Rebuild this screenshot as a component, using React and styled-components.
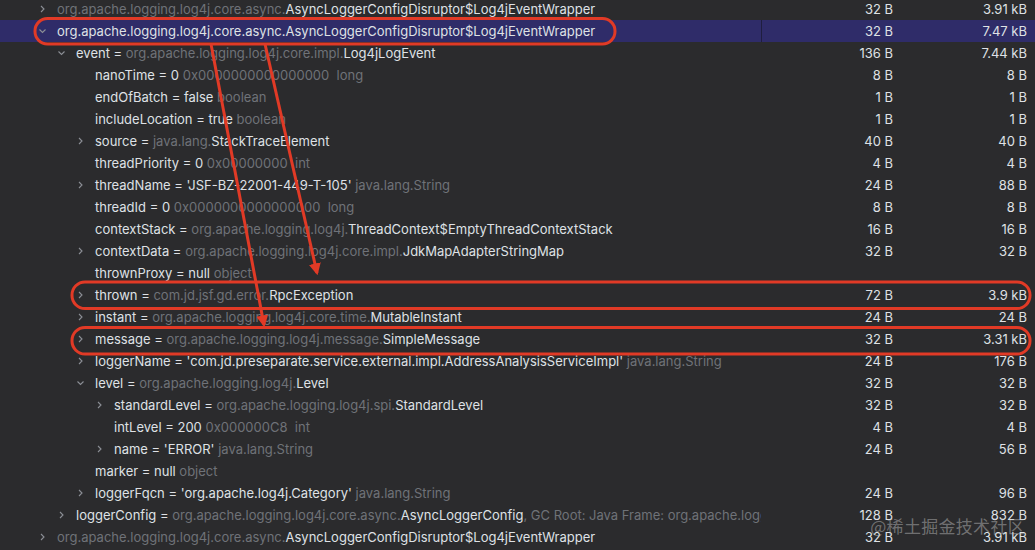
import React from 'react';
import styled, { createGlobalStyle } from 'styled-components';

const GlobalStyle = createGlobalStyle`
    html, body {
        margin: 0;
        padding: 0;
        background: #2b2b2d;
        overflow: hidden;
    }
    body {
        font-family: Inter, 'Noto Sans', sans-serif;
        -webkit-font-smoothing: antialiased;
    }
`;

const Page = styled.div`
    position: relative;
    width: 1035px;
    height: 550px;
    overflow: hidden;
    background: #2b2b2d;
`;

const Tree = styled.div`
    display: flex;
    flex-direction: column;
    margin-top: -2px;
`;

const Row = styled.div`
    display: grid;
    grid-template-columns: 762px 138px 135px;
    height: 22px;
    align-items: center;
    font-size: 13px;
    color: #dfe1e5;
    background: ${p => (p.selected ? '#2f2c69' : 'transparent')};
`;

const NameCell = styled.div`
    display: flex;
    align-items: center;
    height: 100%;
    overflow: hidden;
    padding-left: ${p => 38 + p.level * 19}px;
    border-right: 1px solid ${p => (p.selected ? '#1f1e3f' : 'transparent')};
`;

const Label = styled.span`
    white-space: pre;
`;

const Toggle = styled.span`
    display: inline-flex;
    align-items: center;
    justify-content: flex-start;
    flex: none;
    width: 19px;
    height: 22px;
    color: #8c8f96;
`;

const Gray = styled.span`
    color: #6f7278;
`;

const SizeCell = styled.div`
    text-align: right;
    padding-right: ${p => p.pad}px;
    color: #dfe1e5;
`;

const Overlay = styled.svg`
    position: absolute;
    left: 0;
    top: 0;
    pointer-events: none;
`;

const Watermark = styled.div`
    position: absolute;
    right: 10px;
    bottom: 12px;
    font-family: 'Noto Sans CJK SC', sans-serif;
    font-size: 17px;
    color: rgba(200, 200, 200, 0.45);
    letter-spacing: 0.3px;
`;

const Chevron = ({ open }) => (
    <svg width="10" height="10" viewBox="0 0 10 10">
        {open
            ? <polyline points="1.5,3.5 4.5,6.5 7.5,3.5" fill="none" stroke="currentColor" strokeWidth="1.1" />
            : <polyline points="3,2 6,5 3,8" fill="none" stroke="currentColor" strokeWidth="1.1" />}
    </svg>
);

// [level, toggle ('>', 'v' or ''), name, gray, white, tail, shallow, retained, selected]
const rows = [
    [0, '>', '', 'org.apache.logging.log4j.core.async.', 'AsyncLoggerConfigDisruptor$Log4jEventWrapper', '', '32 B', '3.91 kB'],
    [0, 'v', 'org.apache.logging.log4j.core.async.AsyncLoggerConfigDisruptor$Log4jEventWrapper', '', '', '', '32 B', '7.47 kB', true],
    [1, 'v', 'event = ', 'org.apache.logging.log4j.core.impl.', 'Log4jLogEvent', '', '136 B', '7.44 kB'],
    [2, '', 'nanoTime = 0 ', '0x0000000000000000  long', '', '', '8 B', '8 B'],
    [2, '', 'endOfBatch = false ', 'boolean', '', '', '1 B', '1 B'],
    [2, '', 'includeLocation = true ', 'boolean', '', '', '1 B', '1 B'],
    [2, '>', 'source = ', 'java.lang.', 'StackTraceElement', '', '40 B', '40 B'],
    [2, '', 'threadPriority = 0 ', '0x00000000  int', '', '', '4 B', '4 B'],
    [2, '>', "threadName = 'JSF-BZ-22001-449-T-105' ", 'java.lang.String', '', '', '24 B', '88 B'],
    [2, '', 'threadId = 0 ', '0x0000000000000000  long', '', '', '8 B', '8 B'],
    [2, '', 'contextStack = ', 'org.apache.logging.log4j.', 'ThreadContext$EmptyThreadContextStack', '', '16 B', '16 B'],
    [2, '>', 'contextData = ', 'org.apache.logging.log4j.core.impl.', 'JdkMapAdapterStringMap', '', '32 B', '32 B'],
    [2, '', 'thrownProxy = null ', 'object', '', '', '', ''],
    [2, '>', 'thrown = ', 'com.jd.jsf.gd.error.', 'RpcException', '', '72 B', '3.9 kB'],
    [2, '>', 'instant = ', 'org.apache.logging.log4j.core.time.', 'MutableInstant', '', '24 B', '24 B'],
    [2, '>', 'message = ', 'org.apache.logging.log4j.message.', 'SimpleMessage', '', '32 B', '3.31 kB'],
    [2, '>', "loggerName = 'com.jd.preseparate.service.external.impl.AddressAnalysisServiceImpl' ", 'java.lang.String', '', '', '24 B', '176 B'],
    [2, 'v', 'level = ', 'org.apache.logging.log4j.', 'Level', '', '32 B', '32 B'],
    [3, '>', 'standardLevel = ', 'org.apache.logging.log4j.spi.', 'StandardLevel', '', '32 B', '32 B'],
    [3, '', 'intLevel = 200 ', '0x000000C8  int', '', '', '4 B', '4 B'],
    [3, '>', "name = 'ERROR' ", 'java.lang.String', '', '', '24 B', '56 B'],
    [2, '', 'marker = null ', 'object', '', '', '', ''],
    [2, '>', "loggerFqcn = 'org.apache.log4j.Category' ", 'java.lang.String', '', '', '24 B', '96 B'],
    [1, '>', 'loggerConfig = ', 'org.apache.logging.log4j.core.async.', 'AsyncLoggerConfig', ', GC Root: Java Frame: org.apache.logging.log4j.core.async.AsyncLoggerConfigDisruptor', '128 B', '832 B'],
    [0, '>', '', 'org.apache.logging.log4j.core.async.', 'AsyncLoggerConfigDisruptor$Log4jEventWrapper', '', '32 B', '3.91 kB'],
];

const Annotations = () => (
    <Overlay width="1035" height="550" viewBox="0 0 1035 550">
        <defs>
            <marker id="head" viewBox="0 0 10 10" refX="8" refY="5" markerWidth="4" markerHeight="4" orient="auto">
                <path d="M0,0 L10,5 L0,10 z" fill="#e13a26" />
            </marker>
        </defs>
        <g fill="none" stroke="#e13a26" strokeWidth="3">
            <rect x="35" y="18.5" width="580" height="25.5" rx="12.5" />
            <rect x="72" y="282" width="958" height="26.5" rx="13" />
            <rect x="72" y="327.5" width="958" height="26.5" rx="13" />
            <line x1="211" y1="44" x2="264" y2="325" markerEnd="url(#head)" />
            <line x1="265" y1="44" x2="317" y2="273" markerEnd="url(#head)" />
        </g>
    </Overlay>
);

export default function App() {
    return (
        <Page>
            <GlobalStyle />
            <Tree>
                {rows.map(([level, toggle, name, gray, white, tail, shallow, retained, selected], i) => (
                    <Row key={i} selected={selected}>
                        <NameCell level={level} selected={selected}>
                            <Toggle>{toggle && <Chevron open={toggle === 'v'} />}</Toggle>
                            <Label>
                                {name}
                                {gray && <Gray>{gray}</Gray>}
                                {white}
                                {tail && <Gray>{tail}</Gray>}
                            </Label>
                        </NameCell>
                        <SizeCell pad={7}>{shallow}</SizeCell>
                        <SizeCell pad={8}>{retained}</SizeCell>
                    </Row>
                ))}
            </Tree>
            <Annotations />
            <Watermark>@稀土掘金技术社区</Watermark>
        </Page>
    );
}
